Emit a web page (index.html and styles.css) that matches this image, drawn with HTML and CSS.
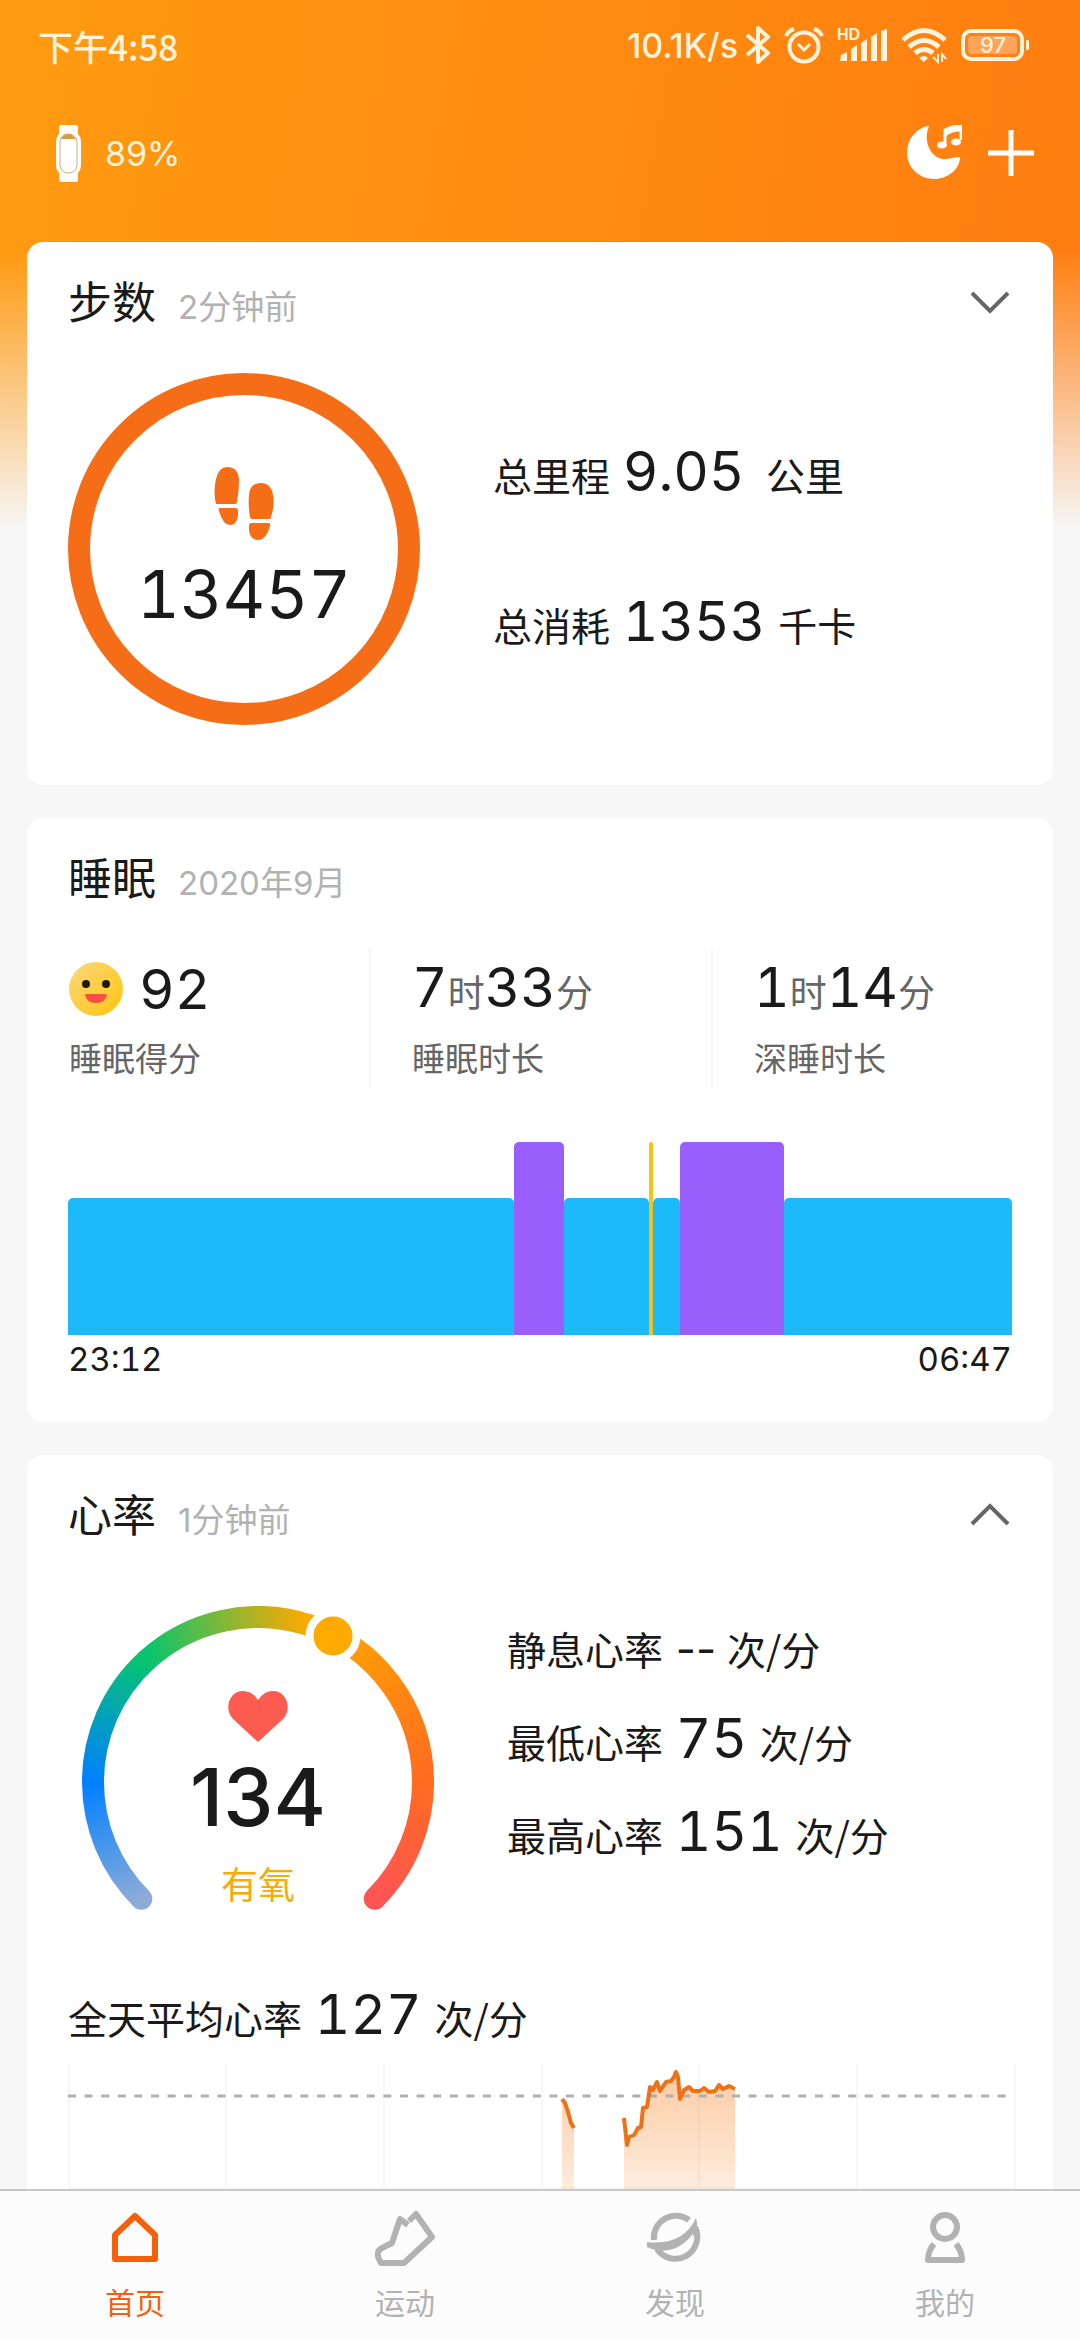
FILE: index.html
```html
<!DOCTYPE html>
<html lang="zh-CN">
<head>
<meta charset="utf-8">
<meta name="viewport" content="width=device-width, initial-scale=1">
<title>首页</title>
<link rel="stylesheet" href="styles.css">
</head>
<body>
<div class="app">
  <div class="content">
    <div class="statusbar">
      <span>下午4:58</span>
      <div class="status-right">
        <span class="net">10.1K/s</span>
        <svg width="26" height="40" viewBox="0 0 26 40" fill="none" stroke="#fff3dc" stroke-width="4" stroke-linejoin="round"><path d="M2 10 23 28 13 37V3L23 12 2 30"/></svg>
        <svg width="40" height="38" viewBox="0 0 40 38" fill="none" stroke="#fff3dc" stroke-width="4"><circle cx="20" cy="21" r="14.5"/><path d="M14 18 20 24 26 18" stroke-width="3"/><path d="M2 10Q4 5 10 3M38 10Q36 5 30 3"/></svg>
        <svg width="51" height="36" viewBox="0 0 51 36" fill="#fff3dc"><text x="0" y="13" class="tiny">HD</text><path d="M4 28 10 25V34H3ZM14 22 20 18V34H14ZM24 16 30 12V34H24ZM34 10 40 6V34H34ZM44 4 50 2V34H44Z"/></svg>
        <svg width="47" height="38" viewBox="0 0 47 38" fill="none" stroke="#fff3dc" stroke-width="5"><path d="M2 14Q23-5 44 14"/><path d="M8 21Q23 8 38 21" /><path d="M14 27Q23 20 32 27"/><path d="M18 32Q23 28 27 32L23 36Z" fill="#fff3dc" stroke="none"/><path d="M37 28V36L32 31M41 36V28L45 33" stroke-width="2"/></svg>
        <svg width="69" height="32" viewBox="0 0 69 32"><rect x="2" y="2" width="59" height="28" rx="8" fill="none" stroke="#fff3dc" stroke-width="4"/><rect x="7" y="7" width="49" height="18" rx="3" fill="#fda45a"/><rect x="65" y="11" width="3" height="10" rx="1" fill="#fff3dc"/><text x="32" y="24" text-anchor="middle" class="batt" fill="#fff3dc">97</text></svg>
      </div>
    </div>

    <header class="toolbar">
      <a class="device" href="#device">
        <svg width="25" height="57" viewBox="0 0 25 57"><path d="M5 0H20Q22 0 22 3V9Q25 12 25 18V39Q25 45 22 48V54Q22 57 20 57H5Q3 57 3 54V48Q0 45 0 39V18Q0 12 3 9V3Q3 0 5 0Z" fill="#fff"/><rect x="4" y="9" width="17" height="39" rx="8" fill="#fff" stroke="#c8b080"/><path d="M5 14Q8 9 12 9T20 14Z" fill="#d99a45"/></svg>
        <span>89%</span>
      </a>
      <button class="icon-btn" type="button" aria-label="助眠">
        <svg width="56" height="56" viewBox="0 0 56 56" fill="#fff"><path d="M23 1C16 17 26 36 41 34C46 33 50 32 54 32C54 44 42 54 28 54C13 54 1 42 1 28C1 14 11 2 23 1Z"/><path d="M39 18V5Q46 1 55 1V15M42 5V8Q47 5 52 5V3Z" fill-rule="evenodd" fill="none" stroke="#fff" stroke-width="3"/><ellipse cx="36" cy="20" rx="5" ry="3.5"/><ellipse cx="50" cy="17" rx="5" ry="3.5"/></svg>
      </button>
      <button class="icon-btn" type="button" aria-label="添加">
        <svg width="46" height="46" viewBox="0 0 46 46" stroke="#fff" stroke-width="5"><path d="M23 0V46M0 23H46"/></svg>
      </button>
    </header>

    <main class="cards">
      <section class="card">
        <div class="card-head">
          <h2>步数</h2><span class="sub">2分钟前</span>
          <button class="chev" type="button" aria-label="展开"><svg width="40" height="24" viewBox="0 0 40 24" fill="none" stroke="#666" stroke-width="4"><path d="M2 3 20 21 38 3"/></svg></button>
        </div>
        <div class="steps">
          <div class="ring">
            <svg width="60" height="74" viewBox="0 0 60 74" fill="#f66d17"><path d="M2 37Q-1 24 2 12Q5 0 13 0Q25 0 25 14Q25 24 23 35Q23 37 21 37ZM6 41H22Q24 41 24 44V48Q23 58 16 58Q9 58 5 44Q4 41 6 41ZM38 52Q36 52 36 50Q34 38 35 28Q36 16 47 16Q57 16 59 28Q61 38 57 50Q57 52 55 52ZM37 56H54Q57 56 56 59Q52 73 44 73Q36 73 35 63V59Q35 56 37 56Z"/></svg>
            <span class="ring-num">13457</span>
          </div>
          <div class="step-rows">
            <p>总里程 <b class="num">9.05</b>&nbsp; 公里</p>
            <p>总消耗 <b class="num">1353</b> 千卡</p>
          </div>
        </div>
      </section>

      <section class="card">
        <div class="card-head"><h2>睡眠</h2><span class="sub">2020年9月</span></div>
        <div class="sleep-stats">
          <div class="stat">
            <div class="value face-row">
              <svg width="54" height="54" viewBox="0 0 54 54"><defs><linearGradient id="face" x1="0" y1="0" x2="1" y2="1"><stop offset="0" stop-color="#fbd77c"/><stop offset="1" stop-color="#fec50f"/></linearGradient></defs><circle cx="27" cy="27" r="27" fill="url(#face)"/><ellipse cx="17" cy="22" rx="4" ry="4" fill="#221a08"/><ellipse cx="37" cy="22" rx="4" ry="4" fill="#221a08"/><path d="M16 32H38Q37 41 27 41T16 32Z" fill="#fb4f40"/></svg>
              <b class="num">92</b>
            </div>
            <div class="label">睡眠得分</div>
          </div>
          <div class="stat">
            <div class="value"><b class="num">7</b>时<b class="num">33</b>分</div>
            <div class="label">睡眠时长</div>
          </div>
          <div class="stat">
            <div class="value"><b class="num">1</b>时<b class="num">14</b>分</div>
            <div class="label">深睡时长</div>
          </div>
        </div>
        <div class="sleep-chart">
          <i class="light" style="flex-grow:446"></i><i class="deep" style="flex-grow:50"></i><i class="light" style="flex-grow:85"></i><i class="awake" style="flex-grow:4"></i><i class="light" style="flex-grow:27"></i><i class="deep" style="flex-grow:104"></i><i class="light" style="flex-grow:228"></i>
        </div>
        <div class="axis"><span>23:12</span><span>06:47</span></div>
      </section>

      <section class="card">
        <div class="card-head">
          <h2>心率</h2><span class="sub">1分钟前</span>
          <button class="chev" type="button" aria-label="收起"><svg width="40" height="24" viewBox="0 0 40 24" fill="none" stroke="#666" stroke-width="4"><path d="M2 21 20 3 38 21"/></svg></button>
        </div>
        <div class="heart">
          <div class="gauge">
            <svg class="gauge-arc" width="352" height="304" viewBox="0 0 352 304" fill="none" stroke-width="22">
              <defs>
                <linearGradient id="g1" gradientUnits="userSpaceOnUse" x1="59" y1="293" x2="11" y2="176"><stop stop-color="#8eabd8"/><stop offset="1" stop-color="#0080ff"/></linearGradient>
                <linearGradient id="g2" gradientUnits="userSpaceOnUse" x1="11" y1="176" x2="66" y2="53"><stop stop-color="#0080ff"/><stop offset="1" stop-color="#06c56e"/></linearGradient>
                <linearGradient id="g3" gradientUnits="userSpaceOnUse" x1="66" y1="53" x2="227" y2="19"><stop stop-color="#06c56e"/><stop offset="1" stop-color="#ffaa00"/></linearGradient>
                <linearGradient id="g4" gradientUnits="userSpaceOnUse" x1="227" y1="19" x2="341" y2="176"><stop stop-color="#ffaa00"/><stop offset="1" stop-color="#ff6b20"/></linearGradient>
                <linearGradient id="g5" gradientUnits="userSpaceOnUse" x1="341" y1="176" x2="293" y2="293"><stop stop-color="#ff6b20"/><stop offset="1" stop-color="#ff5454"/></linearGradient>
              </defs>
              <circle cx="59.3" cy="292.7" r="11" fill="#8eabd8" stroke="none"/>
              <circle cx="292.7" cy="292.7" r="11" fill="#ff5454" stroke="none"/>
              <path d="M59.3 292.7A165 165 0 0 1 11 176" stroke="url(#g1)"/>
              <path d="M11 178.9A165 165 0 0 1 65.6 53.4" stroke="url(#g2)"/>
              <path d="M63.5 55.3A165 165 0 0 1 227 19.1" stroke="url(#g3)"/>
              <path d="M224.2 18.2A165 165 0 0 1 341 176" stroke="url(#g4)"/>
              <path d="M341 173.1A165 165 0 0 1 292.7 292.7" stroke="url(#g5)"/>
              <circle cx="251" cy="30" r="23.5" fill="#fa0" stroke="#fff" stroke-width="8"/>
            </svg>
            <div class="gauge-info">
              <svg width="60" height="51" viewBox="0 0 60 51" fill="#fc5b50"><path d="M30 51 5 28C-5 17 2 0 15 0Q24 0 30 9Q36 0 45 0C58 0 65 17 55 28Z"/></svg>
              <span class="bpm">134</span>
              <span class="zone">有氧</span>
            </div>
          </div>
          <div class="heart-rows">
            <p>静息心率 <b class="num none">--</b> 次/分</p>
            <p>最低心率 <b class="num">75</b> 次/分</p>
            <p>最高心率 <b class="num">151</b> 次/分</p>
          </div>
        </div>
        <p class="average">全天平均心率 <b class="num">127</b> 次/分</p>
        <svg class="hr-chart" viewBox="0 0 948 220" fill="none">
          <defs><linearGradient id="area" gradientUnits="userSpaceOnUse" x1="0" y1="8" x2="0" y2="140"><stop stop-color="#fccba4"/><stop offset="1" stop-color="#fef1e5"/></linearGradient></defs>
          <path fill="url(#area)" d="M494 35 497 39 500 48 503 59 506 64V220H494ZM556 54 559 81 561 73 566 71 570 64 573 63 575 44 579 43 582 23 585 26 589 18 592 27 598 18 603 17 606 13 608 8 610 13 612 35 616 26 621 23 625 27H632L636 24 641 28 647 27 651 21 655 25 661 22 667 25V220H556Z"/>
          <path stroke="#777" stroke-width="2" stroke-opacity=".06" d="M1 0V220M158 0V220M316 0V220M474 0V220M631 0V220M789 0V220M947 0V220M0 124H948"/>
          <path stroke="#b0b0b0" stroke-width="3" stroke-dasharray="8 8.6" d="M0 32H944"/>
          <path stroke="#ee7118" stroke-width="4" stroke-linejoin="round" d="M494 35 497 39 500 48 503 59 506 64M556 54 559 81 561 73 566 71 570 64 573 63 575 44 579 43 582 23 585 26 589 18 592 27 598 18 603 17 606 13 608 8 610 13 612 35 616 26 621 23 625 27H632L636 24 641 28 647 27 651 21 655 25 661 22 667 25"/>
        </svg>
      </section>
    </main>
  </div>

  <nav class="tabs">
    <a class="tab active" href="#home"><svg width="60" height="60" viewBox="0 0 60 60" fill="none" stroke="currentColor" stroke-width="6" stroke-linejoin="round"><path d="M10 26 30 7 50 26V50H10Z"/></svg><span>首页</span></a>
    <a class="tab" href="#sport"><svg width="60" height="60" viewBox="0 0 60 60" fill="none" stroke="currentColor" stroke-width="6" stroke-linejoin="round"><path d="M34 12 41 5 57 28 29 54H6Q-1 43 7 39L17 34 25 10 33 16"/></svg><span>运动</span></a>
    <a class="tab" href="#discover"><svg width="60" height="60" viewBox="0 0 60 60" fill="none" stroke="currentColor" stroke-width="6"><path d="M9 31A22 22 0 0 1 44 11"/><path d="M50 18A22 22 0 0 1 12 40"/><path d="M2 33Q38 37 51 9Q55 20 46 30Q35 42 15 42Q6 40 2 38Z" fill="currentColor" stroke="none"/><path d="M18 42Q38 40 48 24Q47 40 32 44Q24 46 18 42Z" fill="#fcfcfc" stroke="none"/></svg><span>发现</span></a>
    <a class="tab" href="#mine"><svg width="60" height="60" viewBox="0 0 60 60" fill="none" stroke="currentColor" stroke-width="6"><circle cx="30" cy="18" r="12"/><path d="M19 35Q13 42 13 51H47Q47 42 41 35" stroke-linejoin="round"/></svg><span>我的</span></a>
  </nav>
</div>
</body>
</html>
```
FILE: styles.css
```css
* { box-sizing: border-box; }

body {
  margin: 0;
  background: #f7f7f7;
  color: #1a1a1a;
  font-family: "Noto Sans CJK SC", sans-serif;
}

h2, p { margin: 0; }
a { color: inherit; text-decoration: none; }
svg { display: block; flex: none; }

button {
  display: grid;
  place-items: center;
  padding: 0;
  border: 0;
  background: none;
}

.app {
  display: flex;
  flex-direction: column;
  height: 100vh;
}

.content {
  flex: 1;
  min-height: 0;
  overflow: hidden;
  background:
    linear-gradient(to bottom, transparent 250px, #f7f7f7 530px),
    linear-gradient(100deg, #ff9b10, #ff7510);
}

/* status bar */
.statusbar {
  display: flex;
  justify-content: space-between;
  align-items: center;
  height: 90px;
  padding: 0 50px 0 38px;
  color: #fff3dc;
  font-size: 35px;
  font-weight: 500;
}

.status-right { display: flex; align-items: center; gap: 13px; }
.net { margin-right: -6px; font: 500 34px Inter, sans-serif; }
.tiny { font: 700 16px "Liberation Sans", sans-serif; }
.batt { font: 500 22px Inter, sans-serif; }

/* toolbar */
.toolbar {
  display: flex;
  align-items: center;
  gap: 26px;
  height: 126px;
  padding: 0 46px 0 56px;
  color: #fff3dc;
}

.device {
  display: flex;
  align-items: center;
  gap: 24px;
  margin-right: auto;
  font: 400 34px Inter, sans-serif;
}

/* cards */
.cards {
  display: flex;
  flex-direction: column;
  gap: 33px;
  padding: 26px 27px;
}

.card {
  padding: 26px 41px 40px;
  border-radius: 16px;
  background: #fff;
}

.card-head {
  display: flex;
  align-items: baseline;
  gap: 22px;
  height: 67px;
  line-height: 64px;
}

.card-head h2 { font-size: 44px; font-weight: 400; }
.sub { color: #b2b2b2; font-family: Inter, "Noto Sans CJK SC", sans-serif; font-size: 33px; }
.chev { align-self: center; width: 44px; height: 46px; margin-left: auto; }

.num {
  margin: 0 4px;
  font-family: Inter, "Noto Sans CJK SC", sans-serif;
  font-feature-settings: "tnum";
  font-size: 55px;
  font-weight: 400;
  line-height: 1;
  color: #1a1a1a;
}

.num.none { margin-right: 2px; font-feature-settings: normal; font-size: 44px; }

/* steps */
.steps {
  display: flex;
  align-items: center;
  gap: 73px;
  padding: 38px 0 20px;
}

.ring {
  display: flex;
  flex-direction: column;
  align-items: center;
  gap: 18px;
  width: 352px;
  height: 352px;
  padding-top: 72px;
  border: 22px solid #f66d17;
  border-radius: 50%;
}

.ring-num {
  font: 400 66px/70px Inter, sans-serif;
  font-feature-settings: "tnum";
}

.step-rows p, .heart-rows p, .average { font-size: 39px; white-space: nowrap; }
.step-rows p { line-height: 150px; }

/* sleep */
.sleep-stats {
  display: grid;
  grid-template-columns: repeat(3, 1fr);
  margin: 38px -41px 54px;
}

.stat { height: 139px; padding: 4px 0 0 42px; color: #666; }
.stat + .stat { padding-left: 41px; border-left: 2px solid #f5f5f5; }
.value { height: 72px; font-size: 37px; line-height: 76px; }
.value .num { margin: 0; }
.face-row { display: flex; align-items: center; gap: 16px; }
.label { margin-top: 8px; font-size: 33px; line-height: 48px; }

.sleep-chart { display: flex; align-items: flex-end; height: 193px; }
.sleep-chart i { flex: 1 1 0; height: 100%; border-radius: 5px 5px 0 0; }
.sleep-chart .light { height: 137px; background: #1cbaf9; }
.sleep-chart .deep { background: #995ffd; }
.sleep-chart .awake { background: #f0c419; }

.axis {
  display: flex;
  justify-content: space-between;
  margin-top: 2px;
  padding-bottom: 1px;
  font: 400 33px/44px Inter, sans-serif;
  font-feature-settings: "tnum";
}

/* heart rate */
.heart { display: flex; gap: 73px; padding: 54px 0 0 14px; }
.gauge { display: grid; height: 304px; margin-top: 4px; }
.gauge-arc, .gauge-info { grid-area: 1 / 1; }
.gauge-info { display: flex; flex-direction: column; align-items: center; padding-top: 85px; }
.bpm { margin-top: 10px; font: 500 80px/90px Inter, sans-serif; }
.zone { margin-top: 16px; color: #f8ab0a; font-size: 37px; line-height: 50px; }
.heart-rows p { line-height: 93px; }
.average { margin: 68px 0 8px; line-height: 78px; }
.hr-chart { width: calc(100% + 4px); }

/* bottom tabs */
.tabs {
  display: grid;
  grid-template-columns: repeat(4, 1fr);
  height: 151px;
  border-top: 2px solid #c8c8c8;
  background: #fcfcfc;
}

.tab {
  display: flex;
  flex-direction: column;
  align-items: center;
  gap: 10px;
  padding-top: 18px;
  color: #b2b2b2;
  font-size: 30px;
  line-height: 44px;
}

.tab.active { color: #f4600c; }
```
